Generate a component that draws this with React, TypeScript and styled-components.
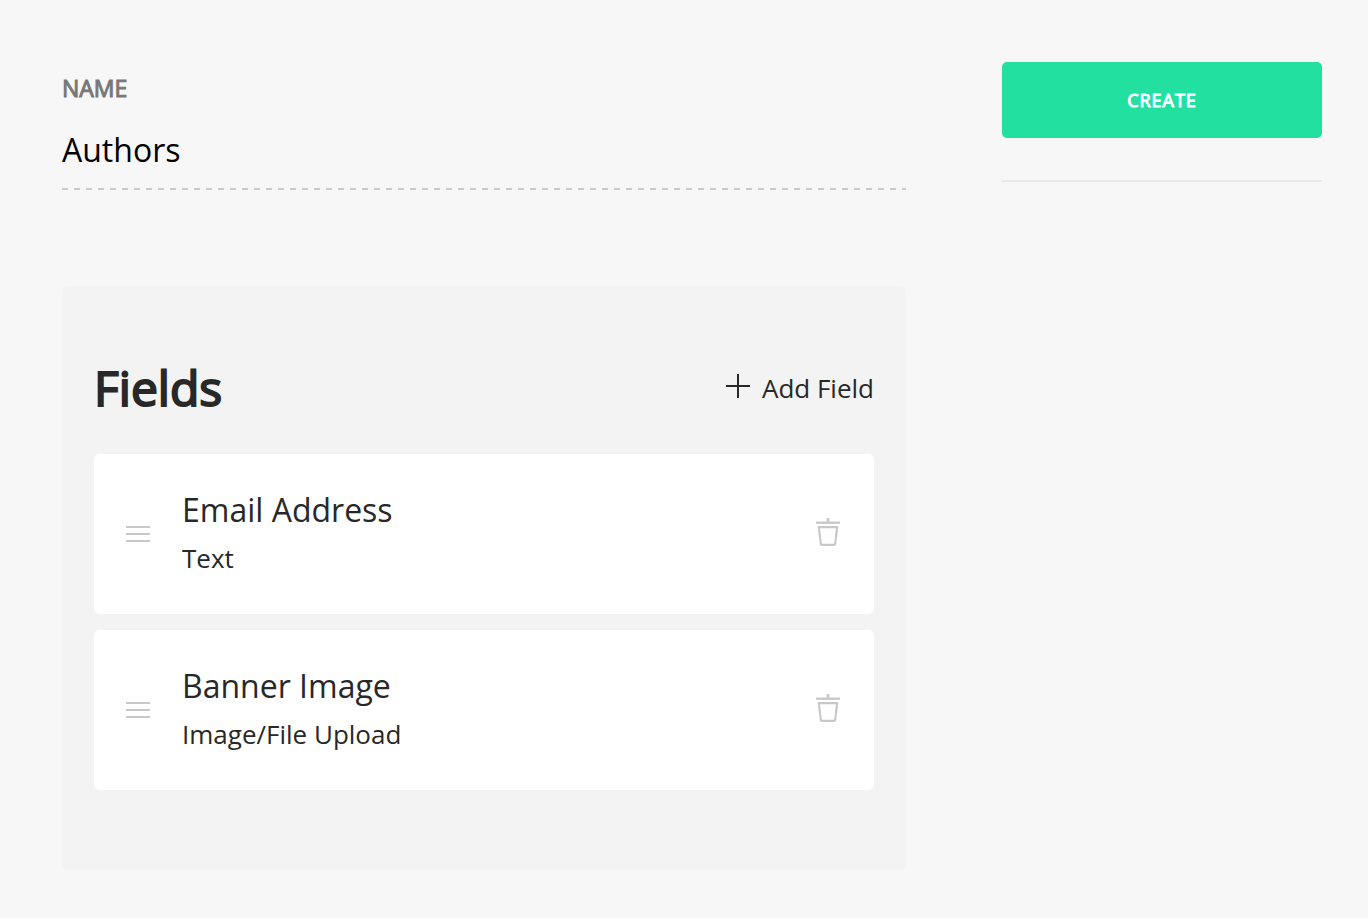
import React, { useState } from "react";
import styled, { createGlobalStyle } from "styled-components";

const GlobalStyle = createGlobalStyle`
  *, *::before, *::after { box-sizing: border-box; }
  body {
    margin: 0;
    background: #f7f7f7;
    color: #282828;
    font-family: "Open Sans", sans-serif;
    font-size: 26px;
  }
  button, input { font: inherit; color: inherit; }
`;

const Page = styled.div`
  display: flex;
  align-items: flex-start;
  gap: 96px;
  padding: 62px 46px 48px 62px;
`;

const Editor = styled.main`
  flex: 1;
  min-width: 0;
`;

const Sidebar = styled.aside`
  flex: 0 0 320px;
  padding-bottom: 42px;
  border-bottom: 2px solid #e9e9e9;
`;

const CreateButton = styled.button`
  display: block;
  width: 100%;
  height: 76px;
  padding: 0;
  border: 0;
  border-radius: 5px;
  background: #22e1a0;
  color: #fff;
  font-size: 18px;
  letter-spacing: 1px;
  -webkit-text-stroke: 1px currentColor;
  text-transform: uppercase;
  cursor: pointer;
`;

const NameLabel = styled.label`
  display: block;
  padding-top: 10px;
  color: #777;
  font-size: 23px;
  -webkit-text-stroke: 1px currentColor;
  line-height: 32px;
  text-transform: uppercase;
`;

const NameInput = styled.input`
  display: block;
  width: 100%;
  height: 86px;
  padding: 8px 0 4px;
  border: 0;
  outline: 0;
  color: #000;
  background: repeating-linear-gradient(90deg, #cbcbcb 0 6px, transparent 6px 12px) left bottom / 100% 2px no-repeat;
  font-size: 32px;
`;

const Panel = styled.section`
  margin-top: 96px;
  padding: 70px 32px 80px;
  border-radius: 5px;
  background: #f3f3f3;
`;

const PanelHeader = styled.header`
  display: flex;
  align-items: center;
  justify-content: space-between;
  height: 64px;
  margin-bottom: 34px;
`;

const Heading = styled.h2`
  margin: 0;
  font-size: 48px;
  font-weight: 400;
  -webkit-text-stroke: 2px currentColor;
  line-height: 64px;
`;

const IconButton = styled.button`
  display: flex;
  align-items: center;
  gap: 12px;
  padding: 0;
  border: 0;
  background: none;
  cursor: pointer;
`;

const AddButton = styled(IconButton)`
  svg { margin-bottom: 4px; }
`;

const FieldList = styled.ul`
  display: grid;
  gap: 16px;
  margin: 0;
  padding: 0;
  list-style: none;
`;

const FieldRow = styled.li`
  display: flex;
  align-items: center;
  gap: 32px;
  height: 160px;
  padding: 0 32px;
  border-radius: 5px;
  background: #fff;
`;

const FieldText = styled.div`
  flex: 1;
  min-width: 0;
`;

const FieldName = styled.div`
  font-size: 32px;
  line-height: 48px;
`;

const FieldType = styled.div`
  line-height: 48px;
`;

const PlusIcon = () => (
  <svg width="24" height="24" viewBox="0 0 24 24" aria-hidden="true">
    <path d="M12 0v24M0 12h24" stroke="#282828" strokeWidth="2" />
  </svg>
);

const HandleIcon = () => (
  <svg width="24" height="16" viewBox="0 0 24 16" aria-hidden="true">
    <path d="M0 1h24M0 8h24M0 15h24" stroke="#c8c8c8" strokeWidth="2" />
  </svg>
);

const TrashIcon = () => (
  <svg width="28" height="32" viewBox="0 0 28 32" fill="none" stroke="#c8c8c8" aria-hidden="true">
    <path d="M2 6.7h24" strokeWidth="2.4" />
    <path d="M14 2v4" strokeWidth="2.8" />
    <path d="M4.8 11.1h18.4l-2.1 17q-.1.8-.9.8H7.8q-.8 0-.9-.8z" strokeWidth="2.2" strokeLinejoin="round" />
  </svg>
);

const TrashButton = styled(IconButton)`
  padding-bottom: 4px;
`;

const fields = [
  { name: "Email Address", type: "Text" },
  { name: "Banner Image", type: "Image/File Upload" },
];

export default function App() {
  const [name, setName] = useState("Authors");
  return (
    <>
      <GlobalStyle />
      <Page>
        <Editor>
          <NameLabel htmlFor="model-name">Name</NameLabel>
          <NameInput id="model-name" value={name} onChange={(e) => setName(e.target.value)} />
          <Panel>
            <PanelHeader>
              <Heading>Fields</Heading>
              <AddButton type="button">
                <PlusIcon />
                Add Field
              </AddButton>
            </PanelHeader>
            <FieldList>
              {fields.map((field) => (
                <FieldRow key={field.name}>
                  <IconButton type="button" aria-label={`Reorder ${field.name}`}>
                    <HandleIcon />
                  </IconButton>
                  <FieldText>
                    <FieldName>{field.name}</FieldName>
                    <FieldType>{field.type}</FieldType>
                  </FieldText>
                  <TrashButton type="button" aria-label={`Delete ${field.name}`}>
                    <TrashIcon />
                  </TrashButton>
                </FieldRow>
              ))}
            </FieldList>
          </Panel>
        </Editor>
        <Sidebar>
          <CreateButton type="button">Create</CreateButton>
        </Sidebar>
      </Page>
    </>
  );
}
